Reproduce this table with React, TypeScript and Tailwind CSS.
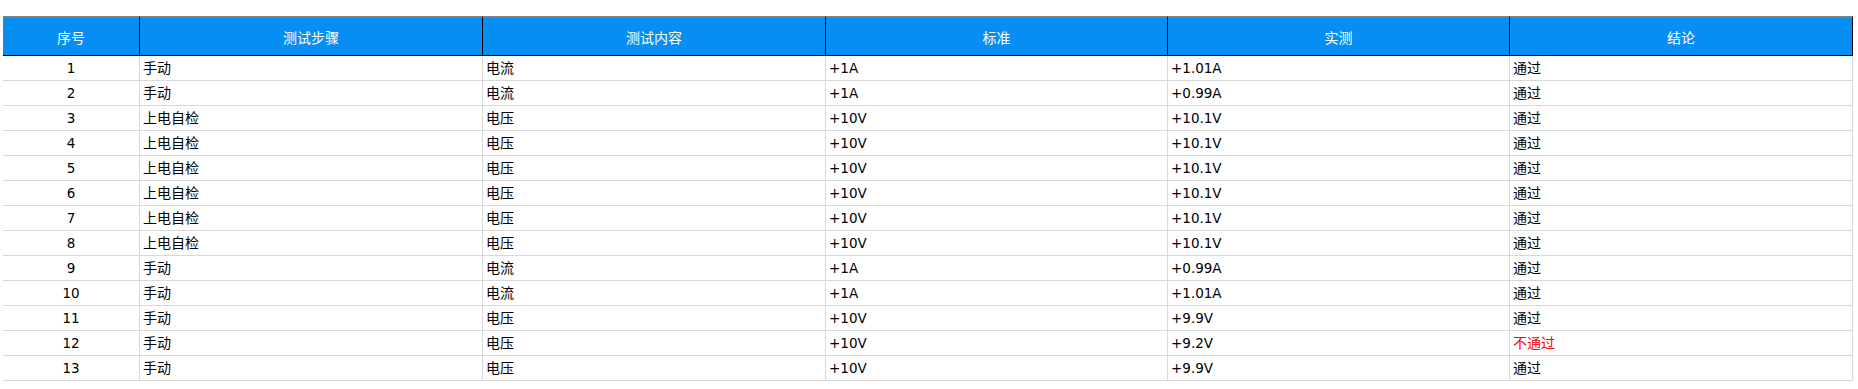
import React from "react";

const rows = [
    ["1", "手动", "电流", "+1A", "+1.01A", "通过"],
    ["2", "手动", "电流", "+1A", "+0.99A", "通过"],
    ["3", "上电自检", "电压", "+10V", "+10.1V", "通过"],
    ["4", "上电自检", "电压", "+10V", "+10.1V", "通过"],
    ["5", "上电自检", "电压", "+10V", "+10.1V", "通过"],
    ["6", "上电自检", "电压", "+10V", "+10.1V", "通过"],
    ["7", "上电自检", "电压", "+10V", "+10.1V", "通过"],
    ["8", "上电自检", "电压", "+10V", "+10.1V", "通过"],
    ["9", "手动", "电流", "+1A", "+0.99A", "通过"],
    ["10", "手动", "电流", "+1A", "+1.01A", "通过"],
    ["11", "手动", "电压", "+10V", "+9.9V", "通过"],
    ["12", "手动", "电压", "+10V", "+9.2V", "不通过"],
    ["13", "手动", "电压", "+10V", "+9.9V", "通过"],
];

const headers = ["序号", "测试步骤", "测试内容", "标准", "实测", "结论"];
const widths = ["w-[137px]", "w-[343px]", "w-[343px]", "w-[342px]", "w-[342px]", "w-[343px]"];

const latin = "font-['DejaVu_Sans','Noto_Sans_CJK_SC',sans-serif] text-[13.5px]";
const cjk = "font-['Noto_Sans_CJK_SC',sans-serif] text-[14px]";

export default function App() {
    return (
        <div className="min-h-screen bg-white pt-4 pl-[3px]">
            <table className="table-fixed border-separate border-spacing-0 w-[1850px]">
                <colgroup>
                    {widths.map((w, i) => (
                        <col key={i} className={w} />
                    ))}
                </colgroup>
                <thead>
                    <tr>
                        {headers.map((h) => (
                            <th
                                key={h}
                                className={`${cjk} h-[40px] p-0 font-normal text-white bg-[#058ef3] border-t-2 border-t-[#808080] border-b border-b-black border-r border-r-black text-center leading-none`}
                            >
                                {h}
                            </th>
                        ))}
                    </tr>
                </thead>
                <tbody>
                    {rows.map((r) => (
                        <tr key={r[0]}>
                            {r.map((c, i) => {
                                const isLatin = i === 0 || i === 3 || i === 4;
                                const fail = i === 5 && c === "不通过";
                                return (
                                    <td
                                        key={i}
                                        className={`${isLatin ? latin : cjk} h-[25px] p-0 ${i === 0 ? "text-center" : "pl-[3px] text-left"} border-b border-r border-[#d9d9d9] leading-none align-middle ${fail ? "text-[#ff0000]" : "text-black"}`}
                                    >
                                        <span className={`relative ${isLatin ? "top-[1px]" : "-top-[1px]"}`}>{c}</span>
                                    </td>
                                );
                            })}
                        </tr>
                    ))}
                </tbody>
            </table>
        </div>
    );
}
